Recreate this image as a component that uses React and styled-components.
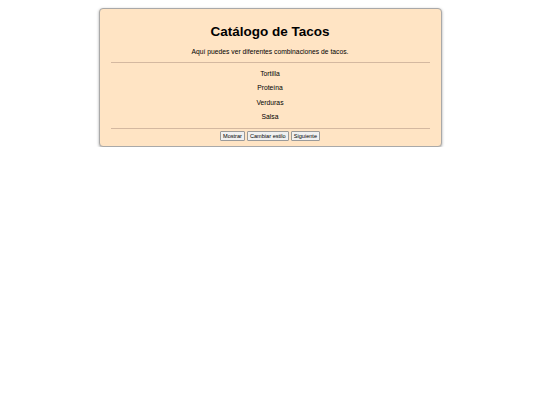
import React from "react";
import styled, { createGlobalStyle } from "styled-components";

const GlobalStyle = createGlobalStyle`
  body {
    margin: 0;
    background: #fff;
    font-family: "Liberation Sans", Arial, sans-serif;
  }
`;

const Card = styled.div`
  width: 319px;
  margin: 8px auto 0;
  padding: 5px 11px 5px;
  background-color: #ffe4c4;
  border: 1px solid #a9a9a9;
  border-radius: 4px;
  box-shadow: 0 1px 3px rgba(0, 0, 0, 0.35);
  text-align: center;
  color: #000;
`;

const Title = styled.h1`
  font-size: 13.5px;
  font-weight: bold;
  line-height: 15px;
  margin: 10px 0 9px;
`;

const Text = styled.p`
  font-size: 6.75px;
  line-height: 8px;
  margin: 6.45px 0;
`;

const Rule = styled.hr`
  border: none;
  border-top: 1px solid #d4b8a0;
  margin: 0;
`;

const ButtonRow = styled.div`
  display: flex;
  justify-content: center;
  gap: 2px;
  margin-top: 2px;
`;

const Button = styled.button`
  font-family: "Liberation Sans", Arial, sans-serif;
  font-size: 5.6px;
  line-height: 6px;
  height: 10px;
  padding: 0 2px;
  background: #f0f0f0;
  border: 1px solid #9a9a9a;
  border-radius: 1px;
  color: #000;
`;

const items = ["Tortilla", "Proteína", "Verduras", "Salsa"];

const App = () => {
  return (
    <>
      <GlobalStyle />
      <Card>
        <Title>Catálogo de Tacos</Title>
        <Text>Aquí puedes ver diferentes combinaciones de tacos.</Text>
        <Rule />
        {items.map((item) => (
          <Text key={item}>{item}</Text>
        ))}
        <Rule />
        <ButtonRow>
          <Button>Mostrar</Button>
          <Button>Cambiar estilo</Button>
          <Button>Siguiente</Button>
        </ButtonRow>
      </Card>
    </>
  );
};

export default App;
